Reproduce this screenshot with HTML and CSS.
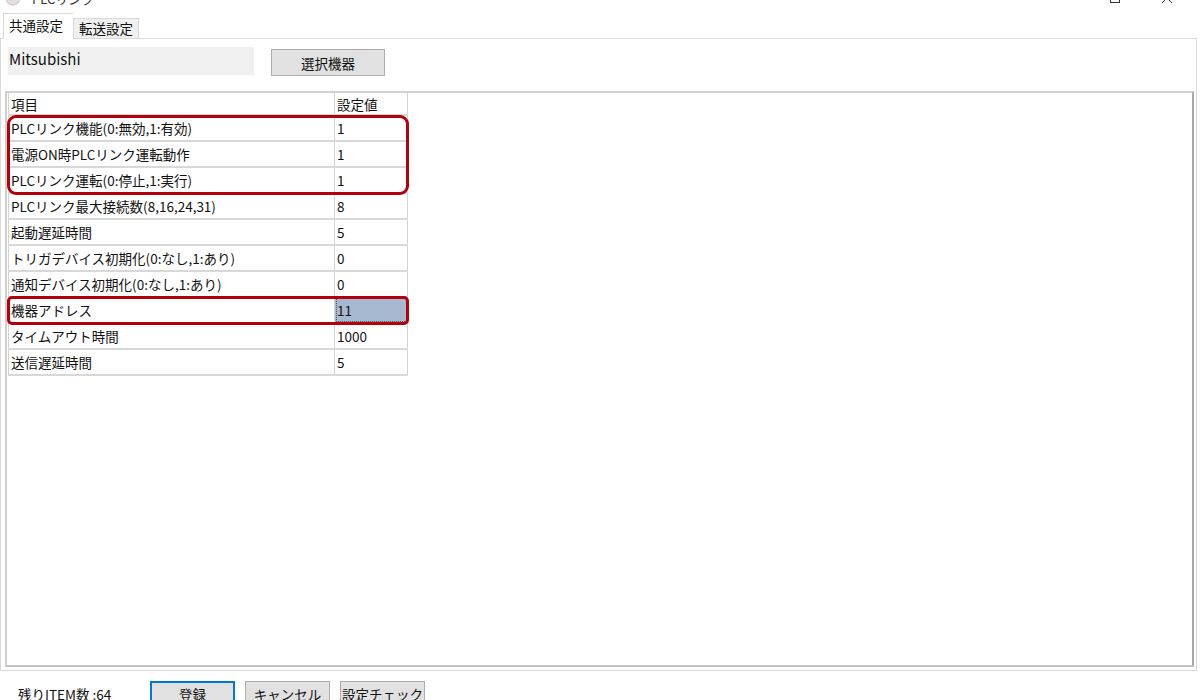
FILE: index.html
```html
<html>
<head>
	<title>PLCリンク</title>
	<link rel="stylesheet" href="styles.css">
</head>
<body>
<div class="titlebar">
	<svg class="appicon" width="16" height="16" viewBox="0 0 16 16"><circle cx="8" cy="8" r="7" fill="#e6dede" stroke="#c9bcbc"/></svg>
	<span class="title">PLCリンク</span>
	<span class="winbtn"><svg width="10" height="2" viewBox="0 0 10 2"><path d="M0 1h10" stroke="#333"/></svg></span>
	<span class="winbtn"><svg width="10" height="10" viewBox="0 0 10 10"><rect x="0.5" y="0.5" width="9" height="9" fill="none" stroke="#333"/></svg></span>
	<span class="winbtn"><svg width="10" height="10" viewBox="0 0 10 10"><path d="M0 0L10 10M10 0L0 10" stroke="#333"/></svg></span>
</div>

<div class="tabs">
	<span class="tab active">共通設定</span>
	<span class="tab">転送設定</span>
</div>

<div class="page">
	<div class="device-row">
		<div class="maker">Mitsubishi</div>
		<button class="btn select">選択機器</button>
	</div>
	<div class="grid">
		<table>
			<tr class="head"><td class="colName">項目</td><td class="colValue">設定値</td></tr>
			<tr><td class="colName">PLCリンク機能(0:無効,1:有効)</td><td class="colValue">1</td></tr>
			<tr><td class="colName">電源ON時PLCリンク運転動作</td><td class="colValue">1</td></tr>
			<tr><td class="colName">PLCリンク運転(0:停止,1:実行)</td><td class="colValue">1</td></tr>
			<tr><td class="colName">PLCリンク最大接続数(8,16,24,31)</td><td class="colValue">8</td></tr>
			<tr><td class="colName">起動遅延時間</td><td class="colValue">5</td></tr>
			<tr><td class="colName">トリガデバイス初期化(0:なし,1:あり)</td><td class="colValue">0</td></tr>
			<tr><td class="colName">通知デバイス初期化(0:なし,1:あり)</td><td class="colValue">0</td></tr>
			<tr><td class="colName">機器アドレス</td><td class="colValue selected">11</td></tr>
			<tr><td class="colName">タイムアウト時間</td><td class="colValue">1000</td></tr>
			<tr><td class="colName">送信遅延時間</td><td class="colValue">5</td></tr>
		</table>
		<div class="mark mark-link"></div>
		<div class="mark mark-addr"></div>
	</div>
</div>

<div class="footer">
	<span class="remain">残りITEM数 :64</span>
	<button class="btn default">登録</button>
	<button class="btn">キャンセル</button>
	<button class="btn">設定チェック</button>
</div>
</body>
</html>
```

FILE: styles.css
```css
body {
	margin: 0;
	width: 1200px;
	height: 700px;
	overflow: hidden;
	background-color: #ffffff;
	font-family: "Noto Sans CJK JP", "Noto Sans", sans-serif;
	font-size: 13px;
	color: #111;
}

.titlebar {
	height: 24px;
	margin-top: -14px;
	display: flex;
	align-items: center;
	padding-left: 5px;
}
.titlebar .appicon {
	margin-right: 11px;
}
.titlebar .title {
	font-size: 13px;
	color: #333;
	flex: 1;
}
.winbtn {
	width: 52px;
	display: flex;
	justify-content: center;
}
.winbtn:last-child {
	margin-right: 7px;
}

.tabs {
	margin-top: 4px;
	height: 24px;
	display: flex;
	align-items: flex-end;
	padding-left: 3px;
	position: relative;
	z-index: 1;
}
.tab {
	height: 19px;
	line-height: 19px;
	padding: 0 5px;
	border: 1px solid #d9d9d9;
	border-bottom: none;
	background-color: #f0f0f0;
	font-size: 13.5px;
}
.tab.active {
	height: 25px;
	line-height: 23px;
	background-color: #ffffff;
	margin-bottom: -1px;
	border-right: none;
	width: 59px;
}

.page {
	width: 1189px;
	border: 1px solid #d9d9d9;
	padding: 8px 2px 3px 4px;
}

.device-row {
	display: flex;
	align-items: flex-start;
	padding-left: 3px;
}
.maker {
	width: 245px;
	height: 28px;
	background-color: #f0f0f0;
	padding-left: 1px;
	font-size: 15px;
	line-height: 24px;
}

.btn {
	font-family: "Noto Sans CJK JP", sans-serif;
	font-size: 13.5px;
	color: #111;
	background-color: #e1e1e1;
	border: 1px solid #adadad;
	height: 27px;
	width: 85px;
	padding: 0;
}
.btn.select {
	width: 114px;
	margin: 2px 0 0 17px;
}
.btn.default {
	border: 2px solid #0078d7;
}

.grid {
	position: relative;
	margin-top: 15px;
	height: 572px;
	border: 2px solid #d0d0d0;
	border-right-color: #a9a9a9;
	border-bottom-color: #c4c4c4;
	background-color: #ffffff;
}
.grid table {
	border-collapse: collapse;
	margin-left: 1px;
}
.grid td {
	height: 26px;
	padding: 0 0 0 2px;
	border-right: 1px solid #d4d4d4;
	border-bottom: 2px solid #d8d8d8;
	font-size: 13.5px;
	white-space: nowrap;
	vertical-align: middle;
}
.grid tr.head td {
	height: 22px;
}
.colName {
	width: 323px;
	border-left: 1px solid #d4d4d4;
}
.colValue {
	width: 70px;
	padding-left: 3px;
	font-size: 13px;
}
.grid td.selected {
	background-color: #a7b8d1;
	outline: 1px dotted #555;
	outline-offset: -2px;
}

.mark {
	position: absolute;
	left: 0;
	width: 396px;
	border: 3px solid #b4000b;
	border-radius: 9px;
}
.mark-link {
	top: 22px;
	height: 74px;
}
.mark-addr {
	top: 203px;
	height: 23px;
	border-radius: 5px;
}

.footer {
	display: flex;
	align-items: center;
	padding: 10px 0 0 18px;
}
.footer .remain {
	width: 132px;
	font-size: 13.5px;
}
.footer .btn {
	height: 26px;
	margin-right: 10px;
}
```
